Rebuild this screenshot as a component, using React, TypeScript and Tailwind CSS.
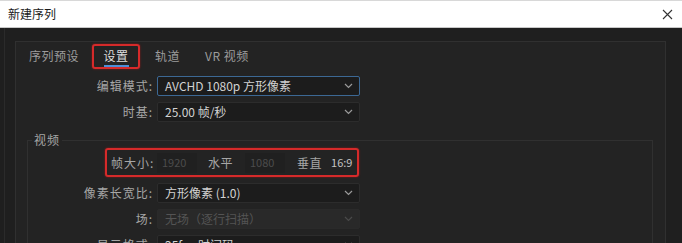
import React from "react";

const font = { fontFamily: '"Noto Sans CJK SC", "Noto Sans", sans-serif' };

function Chevron({ dim = false }: { dim?: boolean }) {
  return (
    <svg width="9" height="6" viewBox="0 0 9 6" className="shrink-0">
      <polyline
        points="1,1 4.5,4.5 8,1"
        fill="none"
        stroke={dim ? "#4a4a4a" : "#9a9a9a"}
        strokeWidth="1.2"
      />
    </svg>
  );
}

function Select({
  text,
  variant = "normal",
}: {
  text: string;
  variant?: "normal" | "active" | "disabled";
}) {
  const cls =
    variant === "active"
      ? "border border-[#3c6894] bg-[#1c1c1c] text-[#d2d2d2]"
      : variant === "disabled"
      ? "border border-[#2a2a2a] bg-[#292929] text-[#545454]"
      : "border border-[#2c2c2c] bg-[#1c1c1c] text-[#d2d2d2]";
  return (
    <div
      className={`flex h-[20px] w-[203px] items-center justify-between rounded-[2px] pl-[7px] pr-[6px] text-[12px] leading-none whitespace-nowrap ${cls}`}
    >
      <span>{text}</span>
      <Chevron dim={variant === "disabled"} />
    </div>
  );
}

function Row({
  label,
  labelW,
  children,
  className = "",
}: {
  label: string;
  labelW: string;
  children: React.ReactNode;
  className?: string;
}) {
  return (
    <div className={`flex items-center ${className}`}>
      <div className={`${labelW} shrink-0 whitespace-nowrap pr-[4px] text-right text-[12px] leading-none text-[#a6a6a6] tracking-[1px]`}>
        {label}
      </div>
      {children}
    </div>
  );
}

export default function App() {
  return (
    <div
      className="flex h-[243px] w-[682px] flex-col overflow-hidden bg-[#1f1f1f]"
      style={font}
    >
      {/* Title bar */}
      <div className="flex h-[28px] shrink-0 items-center justify-between border-t border-[#d8d8d8] border-b border-b-[#c8c8c8] bg-white pl-[8px] pr-[9px]">
        <span className="text-[12px] leading-none text-[#1a1a1a]">新建序列</span>
        <svg width="11" height="11" viewBox="0 0 11 11">
          <path d="M1 1 L10 10 M10 1 L1 10" stroke="#333" strokeWidth="1.1" />
        </svg>
      </div>

      {/* Body */}
      <div className="flex flex-1 pl-[4px]">
        <div className="flex flex-1 border-l border-[#2b2b2b] pl-[10px] pr-[16px] pt-[13px]">
          <div className="flex flex-1 flex-col border-l border-t border-r border-[#303030] bg-[#232323]">
            {/* Tabs */}
            <div className="flex h-[26px] items-center whitespace-nowrap pt-[2px] text-[12px] leading-none tracking-[0.5px]">
              <span className="ml-[13px] text-[#9c9c9c]">序列预设</span>
              <div className="ml-[13px] flex h-[25px] w-[48px] items-center justify-center rounded-[3px] border-2 border-[#d62a2a] shadow-[0_0_2px_#a01818]">
                <span className="relative text-[#dedede]">
                  设置
                  <span className="absolute left-0 right-0 top-[15px] h-[2px] bg-[#4d8fd8]" />
                </span>
              </div>
              <span className="ml-[15px] text-[#9c9c9c]">轨道</span>
              <span className="ml-[25px] text-[#9c9c9c]">VR 视频</span>
            </div>

            {/* Top rows */}
            <div className="mt-[8px] flex flex-col gap-[6px]">
              <Row label="编辑模式:" labelW="w-[141px]">
                <Select text="AVCHD 1080p 方形像素" variant="active" />
              </Row>
              <Row label="时基:" labelW="w-[141px]">
                <Select text="25.00  帧/秒" />
              </Row>
            </div>

            {/* Video group */}
            <fieldset className="ml-[11px] mr-[12px] mt-[12px] border border-[#303030] pb-[20px]">
              <legend className="ml-[4px] px-[2px] text-[12px] leading-none text-[#a6a6a6] tracking-[1px]">
                视频
              </legend>
              <div className="mt-[2px] flex flex-col gap-[6px]">
                <div className="ml-[77px] flex h-[29px] w-[254px] items-center whitespace-nowrap rounded-[3px] border-2 border-[#d62a2a] shadow-[0_0_2px_#a01818] text-[12px] leading-none">
                  <span className="ml-[4px] w-[46px] text-[#a6a6a6] tracking-[1px]">帧大小:</span>
                  <div className="flex h-[20px] w-[40px] items-center bg-[#202020] pl-[5px] text-[11px] text-[#4c4c4c]">
                    1920
                  </div>
                  <span className="ml-[11px] text-[#a6a6a6] tracking-[0.5px]">水平</span>
                  <div className="ml-[12px] flex h-[20px] w-[40px] items-center bg-[#202020] pl-[5px] text-[11px] text-[#4c4c4c]">
                    1080
                  </div>
                  <span className="ml-[12px] text-[#a6a6a6] tracking-[0.5px]">垂直</span>
                  <span className="ml-[9px] text-[11px] text-[#c4c4c4]">16:9</span>
                </div>
                <Row label="像素长宽比:" labelW="w-[129px]">
                  <Select text="方形像素 (1.0)" />
                </Row>
                <Row label="场:" labelW="w-[129px]">
                  <Select text="无场（逐行扫描）" variant="disabled" />
                </Row>
                <Row label="显示格式:" labelW="w-[129px]">
                  <Select text="25fps 时间码" />
                </Row>
              </div>
            </fieldset>
          </div>
        </div>
      </div>
    </div>
  );
}
